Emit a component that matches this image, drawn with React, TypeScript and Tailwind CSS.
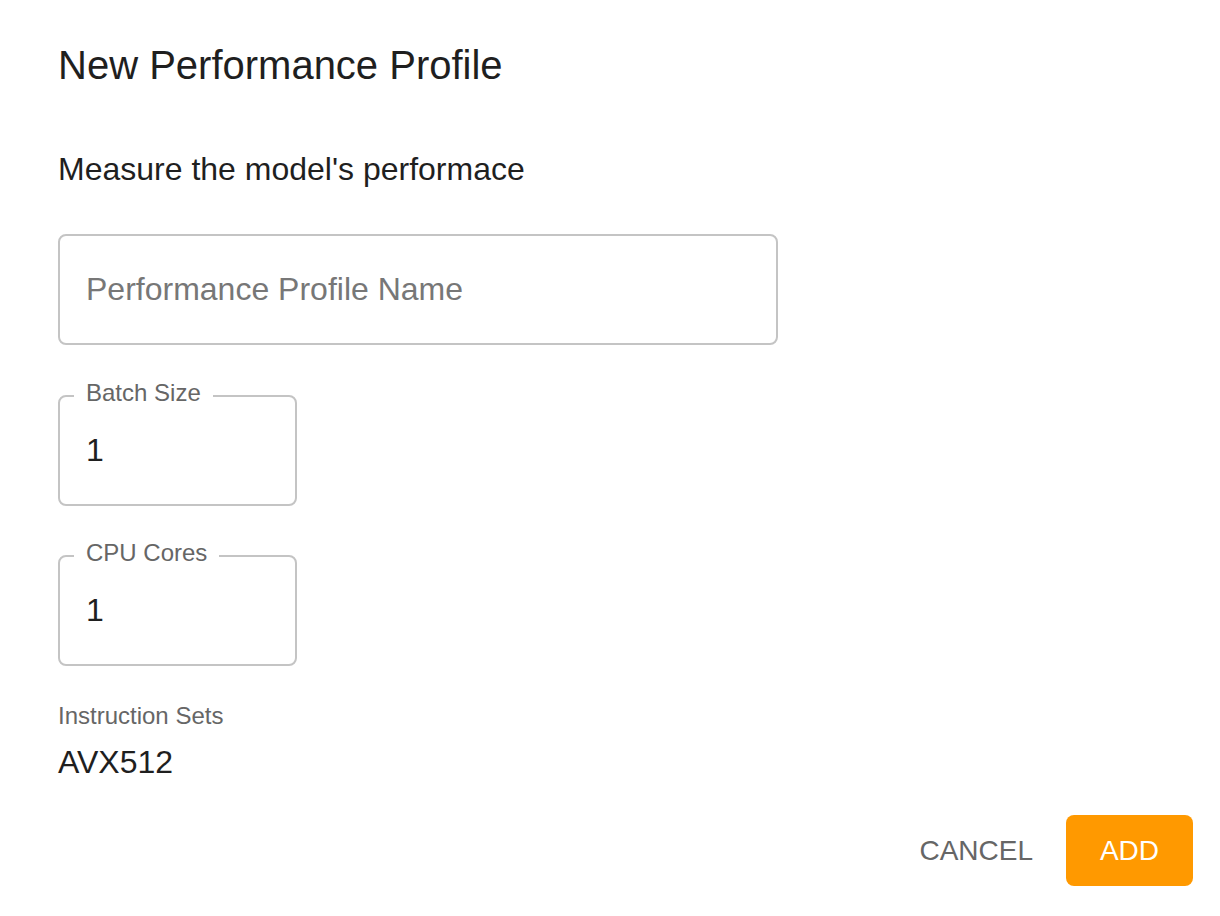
import React from "react";

const font = { fontFamily: '"Liberation Sans", Arial, Helvetica, sans-serif' };

interface FieldProps {
  label: string;
  value: string;
  className?: string;
}

const OutlinedField = ({ label, value, className }: FieldProps) => {
  return (
    <fieldset
      className={`m-0 w-[239px] rounded-[8px] border-2 border-[#c4c4c4] p-0 ${className ?? ""}`}
    >
      <legend className="ml-[14px] px-[12px] pb-[6px] text-[24px] leading-[24px] text-[#666666]">
        {label}
      </legend>
      <input
        readOnly
        defaultValue={value}
        className="block h-[93px] w-full bg-transparent px-[26px] pb-[15px] text-[32px] text-[#1f1f1f] outline-none"
        style={font}
      />
    </fieldset>
  );
};

export default function App() {
  return (
    <div className="min-h-[916px] w-[1220px] bg-white" style={font}>
      <div className="px-[58px] pt-[33px]">
        <h2 className="text-[40px] font-normal leading-[64px] text-[#1f1f1f]">
          New Performance Profile
        </h2>
        <p className="mt-[48px] text-[32px] leading-[48px] text-[#1f1f1f]">
          Measure the model's performace
        </p>

        <input
          readOnly
          placeholder="Performance Profile Name"
          className="mt-[41px] block h-[111px] w-[720px] rounded-[8px] border-2 border-[#c4c4c4] bg-transparent px-[26px] text-[32px] text-[#1f1f1f] outline-none placeholder:text-[#777777]"
          style={font}
        />

        <OutlinedField label="Batch Size" value="1" className="mt-[36px]" />
        <OutlinedField label="CPU Cores" value="1" className="mt-[35px]" />

        <div className="mt-[38px] text-[24px] leading-[24px] text-[#666666]">
          Instruction Sets
        </div>
        <div className="mt-[14px] text-[32px] leading-[40px] text-[#1f1f1f]">
          AVX512
        </div>
      </div>

      <div className="mt-[33px] flex items-center justify-end gap-[17px] pr-[27px]">
        <button className="h-[71px] px-[16px] text-[28px] text-[#666666]" style={font}>
          CANCEL
        </button>
        <button
          className="h-[71px] w-[127px] rounded-[8px] bg-[#ff9900] text-[28px] text-white"
          style={font}
        >
          ADD
        </button>
      </div>
    </div>
  );
}
